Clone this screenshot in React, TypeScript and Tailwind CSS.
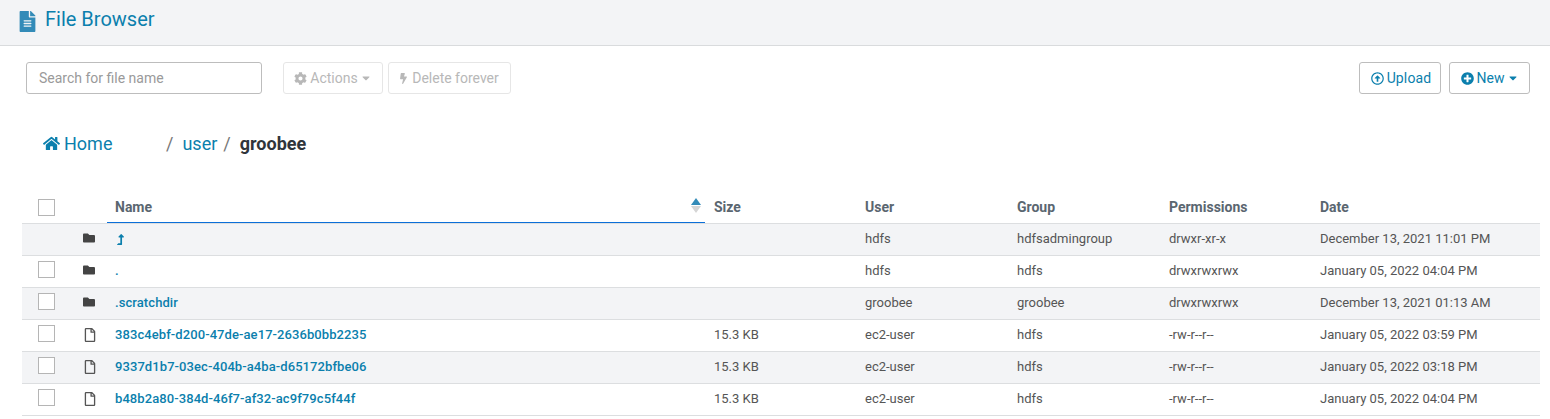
import React from 'react';
import { FaBolt, FaCaretDown, FaCog, FaFileAlt, FaFolder, FaHome, FaLevelUpAlt, FaPlusCircle, FaRegArrowAltCircleUp, FaRegFile } from 'react-icons/fa';

interface Row {
  name: string;
  size: string;
  user: string;
  group: string;
  permissions: string;
  date: string;
  isFolder: boolean;
  noCheck?: boolean;
  up?: boolean;
}

const rows: Row[] = [
  { name: '', size: '', user: 'hdfs', group: 'hdfsadmingroup', permissions: 'drwxr-xr-x', date: 'December 13, 2021 11:01 PM', isFolder: true, noCheck: true, up: true },
  { name: '.', size: '', user: 'hdfs', group: 'hdfs', permissions: 'drwxrwxrwx', date: 'January 05, 2022 04:04 PM', isFolder: true },
  { name: '.scratchdir', size: '', user: 'groobee', group: 'groobee', permissions: 'drwxrwxrwx', date: 'December 13, 2021 01:13 AM', isFolder: true },
  { name: '383c4ebf-d200-47de-ae17-2636b0bb2235', size: '15.3 KB', user: 'ec2-user', group: 'hdfs', permissions: '-rw-r--r--', date: 'January 05, 2022 03:59 PM', isFolder: false },
  { name: '9337d1b7-03ec-404b-a4ba-d65172bfbe06', size: '15.3 KB', user: 'ec2-user', group: 'hdfs', permissions: '-rw-r--r--', date: 'January 05, 2022 03:18 PM', isFolder: false },
  { name: 'b48b2a80-384d-46f7-af32-ac9f79c5f44f', size: '15.3 KB', user: 'ec2-user', group: 'hdfs', permissions: '-rw-r--r--', date: 'January 05, 2022 04:04 PM', isFolder: false },
];

function Checkbox() {
  return <div className="h-[17px] w-[17px] border border-[#b5b5b5] bg-white" />;
}

export default function App() {
  return (
    <div className="h-[419px] overflow-hidden bg-white font-['Roboto',sans-serif] text-[#555]">
      {/* header */}
      <div className="flex h-[46px] items-start border-b border-[#d9dbdd] bg-[#f3f4f6] pl-[17px] pt-[6px]">
        <FaFileAlt className="mt-[5px] text-[#338bb8]" size={21} />
        <span className="ml-[7px] text-[20px] leading-[26px] text-[#0b7fad]">File Browser</span>
      </div>

      {/* toolbar */}
      <div className="mt-[16px] flex h-[32px] items-stretch pl-[26px] pr-[20px] text-[14px]">
        <div className="flex w-[236px] items-center rounded-[3px] border border-[#bdbdbd] pl-[12px] text-[#9a9a9a]">Search for file name</div>
        <button className="ml-[21px] flex w-[100px] items-center justify-center gap-[3px] rounded-[3px] border border-[#e6e6e6] text-[#b8b8b8]">
          <FaCog size={13} />
          Actions
          <FaCaretDown size={12} className="-ml-[1px]" />
        </button>
        <button className="ml-[5px] flex w-[123px] items-center justify-center gap-[3px] rounded-[3px] border border-[#e6e6e6] pr-[2px] text-[#b8b8b8]">
          <FaBolt size={11} />
          Delete forever
        </button>
        <button className="ml-auto flex w-[82px] items-center justify-center gap-[3px] rounded-[3px] border border-[#bdbdbd] pl-[2px] text-[#0b7fad]">
          <FaRegArrowAltCircleUp size={13} />
          <span className="tracking-[0.15px]">Upload</span>
        </button>
        <button className="ml-[8px] flex w-[81px] items-center justify-center gap-[3px] rounded-[3px] border border-[#bdbdbd] pl-[1px] text-[#0b7fad]">
          <FaPlusCircle size={13} />
          New
          <FaCaretDown size={12} />
        </button>
      </div>

      {/* breadcrumbs */}
      <div className="mt-[36px] flex h-[26px] items-center pl-[43px] text-[18px]">
        <FaHome className="text-[#0b7fad]" size={17} />
        <span className="ml-[4px] w-[102px] text-[#0b7fad]">Home</span>
        <span className="text-[#777]">/</span>
        <span className="ml-[9px] text-[#0b7fad]">user</span>
        <span className="ml-[6px] text-[#777]">/</span>
        <span className="ml-[9px] text-[18px] font-bold text-[#2f353b]">groobee</span>
      </div>

      {/* files */}
      <div className="mt-[33px] pl-[22px] pr-[10px]">
        <table className="w-full table-fixed border-collapse text-[13px]">
          <colgroup>
            <col className="w-[48px]" />
            <col className="w-[37px]" />
            <col className="w-[598px]" />
            <col className="w-[152px]" />
            <col className="w-[152px]" />
            <col className="w-[152px]" />
            <col className="w-[151px]" />
            <col />
          </colgroup>
          <thead>
            <tr className="h-[34px] border-b border-[#dcdee0] text-left text-[14px] font-bold text-[#5a6670]">
              <th className="pl-[16px] pt-[3px]"><Checkbox /></th>
              <th />
              <th className="relative pl-[8px] pt-[3px]">
                Name
                <span className="absolute right-[4px] top-[9px] flex flex-col gap-[1px]">
                  <span className="h-0 w-0 border-x-[5px] border-b-[7px] border-x-transparent border-b-[#338bb8]" />
                  <span className="h-0 w-0 border-x-[5px] border-t-[7px] border-x-transparent border-t-[#d5d5d5]" />
                </span>
                <span className="absolute inset-x-0 bottom-0 h-px bg-[#0b6fd8]" />
              </th>
              <th className="pl-[9px] pt-[3px]">Size</th>
              <th className="pl-[8px] pt-[3px]">User</th>
              <th className="pl-[8px] pt-[3px]">Group</th>
              <th className="pl-[8px] pt-[3px]">Permissions</th>
              <th className="pl-[8px] pt-[3px]">Date</th>
            </tr>
          </thead>
          <tbody>
            {rows.map((row, index) => (
              <tr key={index} className={`h-[32px] border-b border-[#dcdee0] ${index % 2 === 0 ? 'bg-[#f3f4f6]' : 'bg-white'}`}>
                <td className="pb-[3px] pl-[16px]">{!row.noCheck && <Checkbox />}</td>
                <td className={`pl-[13px] ${row.isFolder ? 'pb-[2px]' : ''}`}>
                  {row.isFolder ? <FaFolder size={12} className="text-[#444]" /> : <FaRegFile size={14} className="text-[#555]" />}
                </td>
                <td className="pl-[8px] font-medium tracking-[0.08px] text-[#0b7fad]">
                  {row.up ? <FaLevelUpAlt size={11} /> : row.name}
                </td>
                <td className="pl-[9px]">{row.size}</td>
                <td className="pl-[8px]">{row.user}</td>
                <td className="pl-[8px]">{row.group}</td>
                <td className="pl-[8px]">{row.permissions}</td>
                <td className="pl-[8px]">{row.date}</td>
              </tr>
            ))}
          </tbody>
        </table>
      </div>
    </div>
  );
}
